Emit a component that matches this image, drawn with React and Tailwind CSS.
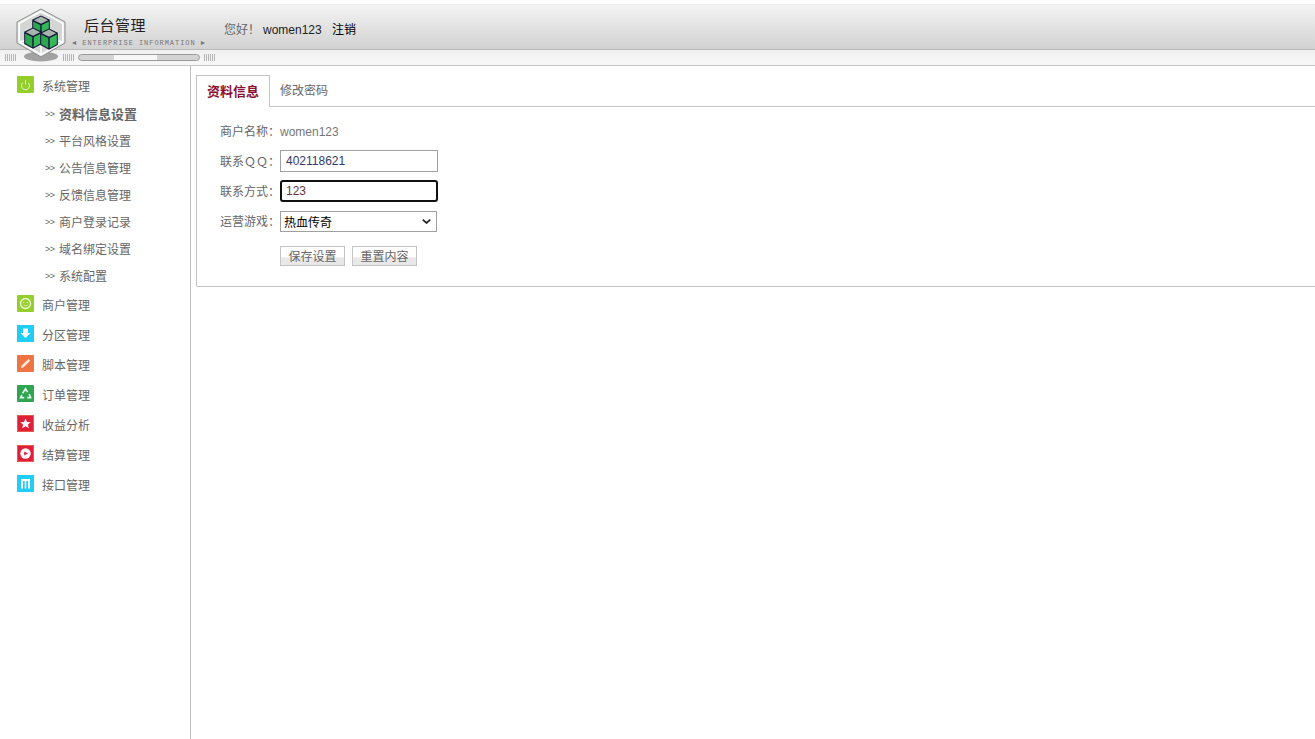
import React from "react";

const font = "font-['Liberation_Sans','Noto_Sans_CJK_SC',sans-serif]";

function Grip({ className = "" }) {
  return (
    <div className={`flex gap-px h-[7px] ${className}`}>
      {[0, 1, 2, 3, 4, 5].map((i) => (
        <span key={i} className="w-px h-full bg-[#b4b4b4]" />
      ))}
    </div>
  );
}

function Cube({ x, y }) {
  return (
    <g transform={`translate(${x} ${y})`}>
      <path d="M0 -10.5 L8.8 -6.2 L8.8 6 L0 10.8 L-8.8 6 L-8.8 -6.2 Z" fill="#14143a" />
      <path d="M0 -9.4 L7.2 -5.8 L0 -2.2 L-7.2 -5.8 Z" fill="#a7b5aa" />
      <path d="M-7.8 -4.6 L-0.7 -1 L-0.7 9.2 L-7.8 5.3 Z" fill="#2ba64d" />
      <path d="M7.8 -4.6 L0.7 -1 L0.7 9.2 L7.8 5.3 Z" fill="#36b85a" />
    </g>
  );
}

function Logo() {
  return (
    <svg width="56" height="58" viewBox="0 0 56 58" className="shrink-0">
      <ellipse cx="28" cy="48.5" rx="17" ry="5" fill="#5f5f5f" opacity="0.55" />
      <path d="M28 1 L52 14 L52 35 L28 49 L4 35 L4 14 Z" fill="#dfe0df" stroke="#8b8e8c" strokeWidth="1" />
      <path d="M28 3.5 L49.8 15.4 L49.8 33.8 L28 46.6 L6.2 33.8 L6.2 15.4 Z" fill="#d4d6d4" stroke="#ffffff" strokeWidth="1.6" />
      <path d="M28 26 L28 46.6 M28 30 L6.2 33.8 M28 30 L49.8 33.8" stroke="#ffffff" strokeWidth="1.4" />
      <Cube x={28} y={18} />
      <Cube x={20} y={30} />
      <Cube x={36} y={31} />
    </svg>
  );
}

function PowerIcon() {
  return (
    <svg viewBox="0 0 17 17" className="w-[17px] h-[17px]">
      <rect width="17" height="17" rx="1" fill="#93ce2a" />
      <path d="M5.8 6.8 A4 4 0 1 0 11.2 6.8" fill="none" stroke="#e8f5cf" strokeWidth="1" />
      <path d="M8.5 4 V8.5" stroke="#e8f5cf" strokeWidth="1" />
    </svg>
  );
}
function SmileIcon() {
  return (
    <svg viewBox="0 0 17 17" className="w-[17px] h-[17px]">
      <rect width="17" height="17" rx="1" fill="#93ce2a" />
      <circle cx="8.5" cy="8.5" r="5" fill="none" stroke="#eef8d8" strokeWidth="1.4" />
      <circle cx="6.8" cy="7.5" r="0.7" fill="#eef8d8" />
      <circle cx="10.2" cy="7.5" r="0.7" fill="#eef8d8" />
      <path d="M6.5 10 Q8.5 11.8 10.5 10" fill="none" stroke="#eef8d8" strokeWidth="0.8" />
    </svg>
  );
}
function DownIcon() {
  return (
    <svg viewBox="0 0 17 17" className="w-[17px] h-[17px]">
      <rect width="17" height="17" fill="#1fcdf5" />
      <path d="M6 3.5 H11 V8 H13.5 L8.5 13 L3.5 8 H6 Z" fill="#ffffff" />
    </svg>
  );
}
function PenIcon() {
  return (
    <svg viewBox="0 0 17 17" className="w-[17px] h-[17px]">
      <rect width="17" height="17" rx="1" fill="#ef7443" />
      <path d="M4 13 L4.6 10.6 L11.4 3.9 L13.2 5.7 L6.4 12.4 Z" fill="#fbe6dc" />
    </svg>
  );
}
function RecycleIcon() {
  return (
    <svg viewBox="0 0 17 17" className="w-[17px] h-[17px]">
      <rect width="17" height="17" rx="1" fill="#2fa552" />
      <path d="M5.6 8.2 L8.5 3.8 L10.6 7.2 M12.2 9 L13.6 12.6 H10.2 M7.2 12.6 H3.6 L4.8 10" fill="none" stroke="#eaf8ee" strokeWidth="1.6" />
    </svg>
  );
}
function StarIcon() {
  return (
    <svg viewBox="0 0 17 17" className="w-[17px] h-[17px]">
      <rect x="0.5" y="0.5" width="16" height="16" fill="#e01f38" stroke="#e75b4d" />
      <path d="M8.5 3.5 L10 7 L13.7 7.2 L10.9 9.6 L11.8 13.2 L8.5 11.3 L5.2 13.2 L6.1 9.6 L3.3 7.2 L7 7 Z" fill="#ffffff" />
    </svg>
  );
}
function PlayIcon() {
  return (
    <svg viewBox="0 0 17 17" className="w-[17px] h-[17px]">
      <rect x="0.5" y="0.5" width="16" height="16" fill="#e01f38" stroke="#e75b4d" />
      <circle cx="8.5" cy="8.5" r="5.2" fill="#ffffff" />
      <path d="M7.2 6.4 L11 8.5 L7.2 10.6 Z" fill="#e01f38" />
    </svg>
  );
}
function BarsIcon() {
  return (
    <svg viewBox="0 0 17 17" className="w-[17px] h-[17px]">
      <rect width="17" height="17" fill="#1fcdf5" />
      <path d="M4 4 H13 V13.5 H11 V6 H9.3 V13.5 H7.7 V6 H6 V13.5 H4 Z" fill="#ffffff" />
    </svg>
  );
}

const subItems = ["资料信息设置", "平台风格设置", "公告信息管理", "反馈信息管理", "商户登录记录", "域名绑定设置", "系统配置"];
const mainItems = [
  [SmileIcon, "商户管理"],
  [DownIcon, "分区管理"],
  [PenIcon, "脚本管理"],
  [RecycleIcon, "订单管理"],
  [StarIcon, "收益分析"],
  [PlayIcon, "结算管理"],
  [BarsIcon, "接口管理"],
];

function MenuRow({ Icon, label }) {
  return (
    <div className="h-[30px] flex items-center pl-[17px] gap-[8px]">
      <span className="relative -top-[1.5px] block h-[17px]"><Icon /></span>
      <span className="relative top-px text-[12px] text-[#666666]">{label}</span>
    </div>
  );
}

function Field({ label, children }) {
  return (
    <div className="flex items-center h-[30px]">
      <span className="relative top-px w-[60px] text-[12px] text-[#666666] shrink-0 whitespace-nowrap">{label}</span>
      {children}
    </div>
  );
}

function Btn({ children }) {
  return (
    <button className="w-[65px] h-[20px] pt-[2px] leading-[16px] border border-[#c4c4c4] text-[12px] text-[#666666] bg-[linear-gradient(#ffffff_0,#ffffff_55%,#e8e8e8_60%,#e8e8e8_100%)]">
      {children}
    </button>
  );
}

export default function App() {
  return (
    <div className={`${font} w-[1315px] h-[739px] overflow-hidden bg-white flex flex-col`}>
      <header className="h-[66px] shrink-0 flex flex-col border-b border-[#c4c4c4]">
        <div className="h-[4px] bg-white" />
        <div className="h-[46px] bg-[linear-gradient(#f3f3f3,#d2d2d2)] border-t border-[#ededed] border-b-[#b8b8b8] border-b flex items-center pl-[12px] relative">
          <span className="absolute left-[13px] top-[3px] z-10"><Logo /></span>
          <div className="ml-[60px] w-[140px] flex flex-col items-start relative top-[5px]">
            <span className="ml-[12px] text-[15px] leading-[16px] tracking-[0.5px] text-[#222222]">后台管理</span>
            <span className="mt-[5px] text-[7px] leading-[8px] tracking-[0.95px] whitespace-nowrap text-[#777777] font-['Liberation_Mono',monospace]">◄ ENTERPRISE INFORMATION ►</span>
          </div>
          <div className="flex items-center text-[12px] ml-[12px] relative top-[3px]">
            <span className="text-[#666666] w-[39px]">您好！</span>
            <span className="text-[#222222] w-[69px]">women123</span>
            <span className="text-[#000000]">注销</span>
          </div>
        </div>
        <div className="h-[15px] bg-[linear-gradient(#f0f0f0,#f8f8f8)] flex items-center">
          <Grip className="ml-[5px]" />
          <Grip className="ml-[47px]" />
          <div className="ml-[4px] w-[122px] h-[7px] rounded-full border border-[#9a9a9a] bg-[linear-gradient(90deg,#d4d4d4_0,#d4d4d4_29%,#f8f8f8_29%,#f8f8f8_65%,#d4d4d4_65%,#d4d4d4_100%)]" />
          <Grip className="ml-[4px]" />
        </div>
      </header>

      <div className="flex-1 flex min-h-0">
        <aside className="w-[191px] shrink-0 border-r border-[#bdbdbd] pt-[5px]">
          <MenuRow Icon={PowerIcon} label="系统管理" />
          <div className="flex flex-col">
            {subItems.map((s, i) => (
              <div key={s} className="h-[27px] flex items-center pl-[45px] text-[#666666]">
                <span className="w-[14px] text-[9px] tracking-[-0.5px]">&gt;&gt;</span>
                <span className={i === 0 ? "font-bold text-[13px]" : "text-[12px]"}>{s}</span>
              </div>
            ))}
          </div>
          {mainItems.map(([Icon, label]) => (
            <MenuRow key={label} Icon={Icon} label={label} />
          ))}
        </aside>

        <main className="flex-1 min-w-0 pl-[5px] pt-[9px]">
          <div className="h-[212px] border-l border-b border-[#c4c4c4] rounded-bl-[2px] flex flex-col">
            <div className="h-[32px] shrink-0 flex border-b border-[#c4c4c4] relative">
              <div className="w-[73px] h-[32px] bg-white border-t border-r border-[#c4c4c4] flex items-center justify-center text-[13px] font-bold text-[#8a1033]">资料信息</div>
              <div className="ml-[10px] flex items-center text-[12px] text-[#666666]">修改密码</div>
            </div>
            <div className="pl-[23px] pt-[9px] flex flex-col">
              <Field label="商户名称：">
                <span className="relative top-px text-[12px] text-[#777777]">women123</span>
              </Field>
              <Field label="联系ＱＱ：">
                <input readOnly value="402118621" className="w-[158px] h-[22px] border border-[#a0a0a0] px-[5px] text-[12px] text-[#333a6b] outline-none" />
              </Field>
              <Field label="联系方式：">
                <input readOnly value="123" className="w-[158px] h-[22px] border-2 border-[#101010] rounded-[3px] px-[4px] text-[12px] text-[#663344] outline-none" />
              </Field>
              <Field label="运营游戏：">
                <div className="relative w-[157px] h-[21px]">
                  <select defaultValue="热血传奇" className="block appearance-none w-full h-full border border-[#a0a0a0] bg-white pl-[3px] pt-[2px] text-[12px] text-black outline-none">
                    <option>热血传奇</option>
                  </select>
                  <svg viewBox="0 0 9 5" className="absolute right-[6px] top-[8px] w-[9px] h-[5px]">
                    <path d="M0.7 0.7 L4.5 4 L8.3 0.7" fill="none" stroke="#222222" strokeWidth="1.7" />
                  </svg>
                </div>
              </Field>
              <div className="flex gap-[7px] pl-[60px] mt-[10px]">
                <Btn>保存设置</Btn>
                <Btn>重置内容</Btn>
              </div>
            </div>
          </div>
        </main>
      </div>
    </div>
  );
}
